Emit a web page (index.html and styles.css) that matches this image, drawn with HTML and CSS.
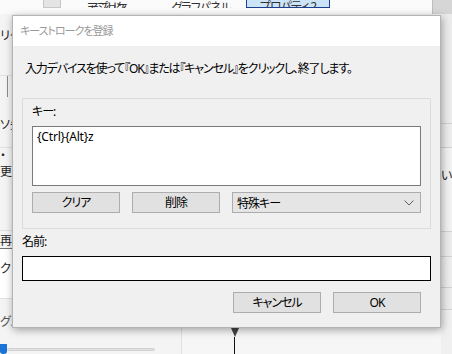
FILE: index.html
```html
<!DOCTYPE html>
<html lang="ja">
<head>
<meta charset="utf-8">
<link rel="stylesheet" href="styles.css">
</head>
<body>
<div class="app">
  <div class="tabs">
    <div class="tabicon"></div>
    <div class="tab t1">アプリケーション</div>
    <div class="tab t2">グラフパネル</div>
    <div class="tab sel">プロパティ 2</div>
    <div class="tabfill"></div>
    <div class="tabscroll"></div>
  </div>
  <div class="main">
    <div class="leftpane">
      <div class="lrow r1"><span>リケ</span></div>
      <div class="lrow r2"><div class="minibox"></div><span>ソ先</span></div>
      <div class="lrow r3"><span class="dot">・</span><span>更</span></div>
      <div class="lrow r4"><span>再圧</span></div>
      <div class="lrow r5"><span>クリ</span></div>
      <div class="lrow r6">
        <span class="faded">グループ表示の設定</span>
        <div class="slider"><div class="thumb"></div><div class="track"></div></div>
      </div>
    </div>
    <div class="center">
      <div class="marker">
        <div class="tri"></div>
        <div class="stem"></div>
      </div>
    </div>
    <div class="rightpane">
      <div class="rrow a"></div>
      <div class="rrow b"></div>
      <div class="rrow c"><span>い</span></div>
      <div class="rrow d"></div>
      <div class="rrow e"></div>
      <div class="rrow f"></div>
      <div class="rrow g"></div>
    </div>
  </div>
</div>

<div class="dialog">
  <div class="titlebar">キーストロークを登録</div>
  <div class="body">
    <p class="instr">入力デバイスを使って『OK』または『キャンセル』をクリックし、終了します。</p>
    <div class="group">
      <div class="glabel">キー:</div>
      <div class="keybox">{Ctrl}{Alt}z</div>
      <div class="btnrow">
        <div class="btn">クリア</div>
        <div class="btn">削除</div>
        <div class="combo">
          <span class="combotext">特殊キー</span>
          <svg class="chev" width="10" height="6" viewBox="0 0 10 6"><path d="M0.5 0.5 L5 5 L9.5 0.5" fill="none" stroke="#606060" stroke-width="1"/></svg>
        </div>
      </div>
    </div>
    <div class="nlabel">名前:</div>
    <div class="namebox"></div>
    <div class="footer">
      <div class="btn">キャンセル</div>
      <div class="btn">OK</div>
    </div>
  </div>
</div>
</body>
</html>
```

FILE: styles.css
```css
* { box-sizing: border-box; }
html, body { margin: 0; padding: 0; }
body {
  width: 452px;
  height: 354px;
  overflow: hidden;
  position: relative;
  font-family: "Noto Sans", "Noto Sans CJK JP", sans-serif;
  font-size: 12px;
  color: #000;
  background: #f3f3f3;
  font-feature-settings: "palt";
}

/* ---------- background application ---------- */
.app {
  width: 452px;
  height: 354px;
  display: flex;
  flex-direction: column;
}
.tabs {
  height: 15px;
  display: flex;
  align-items: flex-start;
  background: #fbfbfb;
  overflow: hidden;
}
.tabicon {
  width: 18px;
  height: 8px;
  margin-left: 43px;
  background: #e4e4e4;
  border: 1px solid #c8c8c8;
  border-top: none;
}
.tab {
  height: 8px;
  line-height: 0;
  font-size: 12px;
  color: #333;
  overflow: hidden;
  display: flex;
  align-items: flex-end;
  justify-content: center;
  letter-spacing: -1px;
}
.tab.t1 { margin-left: 26px; width: 50px; }
.tab.t2 { margin-left: 33px; width: 62px; }
.tab.sel {
  margin-left: 14px;
  width: 84px;
  background: #cce4f7;
  border: 1px solid #1c3f8f;
  border-top: none;
}
.tabfill { flex: 1; }
.tabscroll {
  width: 20px;
  height: 15px;
  background: #d6d6d6;
  border-left: 1px solid #bdbdbd;
}

.main {
  flex: 1;
  display: flex;
}
.leftpane {
  width: 182px;
  border-right: 1px solid #e0e0e0;
  display: flex;
  flex-direction: column;
  background: #f4f4f4;
}
.lrow {
  border-bottom: 1px solid #e0e0e0;
  line-height: 16px;
  color: #222;
}
.lrow span { display: block; }
.r1 { height: 62px; padding-top: 14px; }
.r2 { height: 72px; position: relative; padding-top: 41px; }
.minibox {
  position: absolute;
  left: 7px; top: 0;
  width: 20px; height: 21px;
  border-left: 1px solid #8c8c8c;
}
.r3 { height: 83px; padding-top: 0; }
.r4 { height: 18px; padding-top: 2px; line-height: 16px; border-bottom-color: #707070; }
.r5 { height: 50px; padding-top: 12px; background: #fff; }
.r6 { flex: 1; border-bottom: none; padding-top: 15px; }
.faded { color: #555; }
.slider {
  margin-top: 14px;
  display: flex;
  align-items: center;
  height: 10px;
}
.thumb {
  width: 7px;
  height: 10px;
  background: #1a73d6;
  border-radius: 0 0 3px 3px;
}
.track {
  width: 148px;
  height: 3px;
  background: #e2e2e2;
  border: 1px solid #d0d0d0;
  border-radius: 2px;
}
.center {
  flex: 1;
  background: #f6f6f6;
  display: flex;
  align-items: flex-end;
}
.marker {
  margin-left: 48px;
  width: 9px;
  display: flex;
  flex-direction: column;
  align-items: center;
}
.tri {
  width: 0; height: 0;
  border-left: 4px solid transparent;
  border-right: 4px solid transparent;
  border-top: 9px solid #444;
}
.stem {
  width: 1px;
  height: 17px;
  background: #111;
}
.rightpane {
  width: 11px;
  background: #ececec;
  display: flex;
  flex-direction: column;
}
.rrow { border-bottom: 1px solid #d2d2d2; }
.rrow.a { height: 110px; }
.rrow.b { height: 24px; background: #ededed; }
.rrow.c { height: 84px; background: #f2f2f2; padding-top: 20px; line-height: 16px; font-size: 12px; color: #222; }
.rrow.d { height: 25px; }
.rrow.e { height: 31px; background: #ededed; }
.rrow.f { height: 22px; }
.rrow.g { flex: 1; border-bottom: none; background: #f0f0f0; }

/* ---------- dialog ---------- */
.dialog {
  position: absolute;
  left: 12px;
  top: 15px;
  width: 429px;
  height: 313px;
  background: #f0f0f0;
  border: 1px solid #b4b4b4;
  box-shadow: 1px 2px 8px rgba(0,0,0,0.35);
  display: flex;
  flex-direction: column;
  letter-spacing: -1px;
}
.titlebar {
  height: 30px;
  background: #fff;
  color: #999;
  padding-left: 7px;
  line-height: 30px;
  font-size: 11px;
  white-space: nowrap;
}
.body {
  flex: 1;
  padding: 15px 9px 0 9px;
  display: flex;
  flex-direction: column;
}
.instr {
  margin: 0 0 0 3px;
  line-height: 16px;
  height: 37px;
  white-space: nowrap;
  letter-spacing: -1.15px;
}
.group {
  border: 1px solid #dcdcdc;
  height: 131px;
  padding: 5px 9px 0 9px;
  display: flex;
  flex-direction: column;
}
.glabel { line-height: 16px; height: 22px; }
.keybox {
  height: 60px;
  background: #fff;
  border: 1px solid #7a7a7a;
  padding: 2px 4px;
  line-height: 16px;
  letter-spacing: -0.2px;
}
.btnrow {
  margin-top: 6px;
  display: flex;
  gap: 12px;
}
.btn {
  width: 88px;
  height: 21px;
  background: #e1e1e1;
  border: 1px solid #adadad;
  display: flex;
  align-items: center;
  justify-content: center;
  line-height: 16px;
}
.combo {
  flex: 1;
  height: 21px;
  background: #e5e5e5;
  border: 1px solid #acacac;
  display: flex;
  align-items: center;
  justify-content: space-between;
  padding: 0 6px 0 4px;
}
.combotext { letter-spacing: -1px; }
.nlabel {
  margin-top: 5px;
  line-height: 16px;
  height: 22px;
}
.namebox {
  height: 25px;
  background: #fff;
  border: 1px solid #000;
}
.footer {
  margin-top: 11px;
  display: flex;
  justify-content: flex-end;
  gap: 12px;
  padding-right: 10px;
}
.footer .btn { height: 21px; width: 88px; }
```
